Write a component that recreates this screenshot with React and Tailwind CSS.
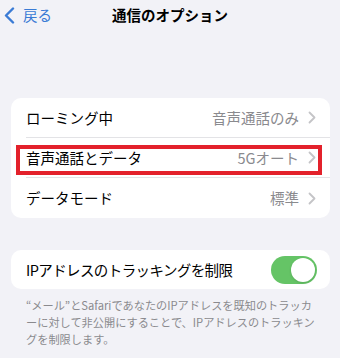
import React from 'react';

const font = { fontFamily: '"Noto Sans CJK JP", "Noto Sans", sans-serif' };

function Chevron() {
    return (
        <svg width="8" height="13" viewBox="0 0 8 13" className="shrink-0">
            <path d="M1.5 1.5 L6.5 6.5 L1.5 11.5" fill="none" stroke="#c4c4c7" strokeWidth="1.8" strokeLinecap="round" strokeLinejoin="round" />
        </svg>
    );
}

function Row({ label, value, last, highlight }) {
    return (
        <div className="relative h-[40px] flex items-center pl-[15px]">
            <div className={`flex-1 h-full flex items-center pr-[14px] ${last ? '' : 'border-b border-[#e3e3e6]'}`}>
                <span className="flex-1 text-[14.5px] text-black">{label}</span>
                <span className="text-[14.5px] text-[#8a8a8e] mr-[9px]">{value}</span>
                <Chevron />
            </div>
            {highlight && (
                <div className="absolute left-[5px] right-[8px] top-[7px] bottom-[3px] border-[4px] border-[#e3212b]" />
            )}
        </div>
    );
}

export default function App() {
    return (
        <div className="w-[340px] h-[358px] bg-[#f2f2f7] overflow-hidden" style={font}>
            {/* Nav bar */}
            <div className="relative h-[30px] flex items-center">
                <div className="absolute left-[4px] top-[7px] flex items-center gap-[8px]">
                    <svg width="11" height="17" viewBox="0 0 11 17">
                        <path d="M9 1.5 L2 8.5 L9 15.5" fill="none" stroke="#3a7bd5" strokeWidth="2.4" strokeLinecap="round" strokeLinejoin="round" />
                    </svg>
                    <span className="text-[14.5px] text-[#3a7bd5] leading-none">戻る</span>
                </div>
                <div className="w-full text-center text-[14.5px] font-bold text-black">通信のオプション</div>
            </div>

            {/* Card 1 */}
            <div className="mx-[11px] mt-[68px] w-[319px] bg-white rounded-[10px]">
                <Row label="ローミング中" value="音声通話のみ" />
                <Row label="音声通話とデータ" value="5Gオート" highlight />
                <Row label="データモード" value="標準" last />
            </div>

            {/* Card 2 */}
            <div className="mx-[11px] mt-[32px] w-[319px] h-[39px] bg-white rounded-[10px] flex items-center pl-[15px] pr-[13px]">
                <span className="flex-1 text-[14.5px] tracking-[-0.6px] text-black">IPアドレスのトラッキングを制限</span>
                <div className="w-[46px] h-[28px] rounded-full bg-[#65c466] flex items-center justify-end pr-[2px]">
                    <div className="w-[24px] h-[24px] rounded-full bg-white shadow" />
                </div>
            </div>

            {/* Footnote */}
            <div className="pl-[26px] pt-[8px] text-[11.2px] leading-[17px] text-[#8a8a8e] whitespace-nowrap">
                <div>“メール”とSafariであなたのIPアドレスを既知のトラッカ</div>
                <div>ーに対して非公開にすることで、IPアドレスのトラッキン</div>
                <div>グを制限します。</div>
            </div>
        </div>
    );
}
